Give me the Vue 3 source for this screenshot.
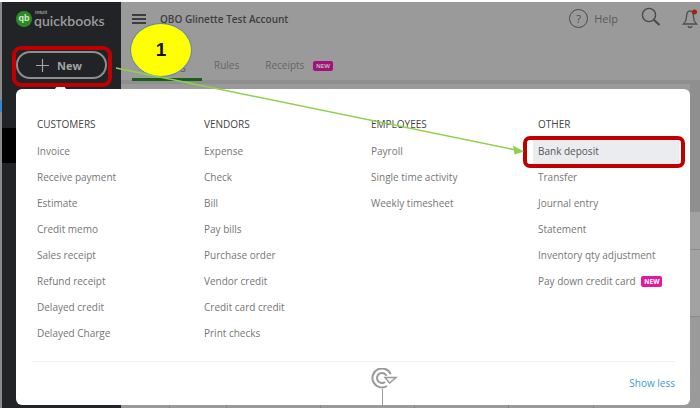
<script setup>
const columns = [
  { title: 'CUSTOMERS', items: ['Invoice', 'Receive payment', 'Estimate', 'Credit memo', 'Sales receipt', 'Refund receipt', 'Delayed credit', 'Delayed Charge'] },
  { title: 'VENDORS', items: ['Expense', 'Check', 'Bill', 'Pay bills', 'Purchase order', 'Vendor credit', 'Credit card credit', 'Print checks'] },
  { title: 'EMPLOYEES', items: ['Payroll', 'Single time activity', 'Weekly timesheet'] },
  { title: 'OTHER', items: ['Bank deposit', 'Transfer', 'Journal entry', 'Statement', 'Inventory qty adjustment', 'Pay down credit card'] },
]
// little column marks of the table behind the menu, they stick out at the bottom
const ticks = [169, 226, 320, 414, 508, 593]
</script>

<template>
  <div class="page">
    <aside class="sidebar">
      <div class="logo">
        <span class="qb">qb</span>
        <div class="wordmark">
          <span class="intuit">intuit</span>
          <span class="quick">quickbooks</span>
        </div>
      </div>
      <div class="new-btn">
        <svg width="13" height="13" viewBox="0 0 13 13"><path d="M6.500 0v13M0 6.500h13" stroke="#a3a3a3" stroke-width="1.2" /></svg>
        <span>New</span>
      </div>
      <div class="blue-mark"></div>
      <div class="black-patch"></div>
    </aside>

    <main class="content">
      <header class="topbar">
        <div class="burger"><i></i><i></i><i></i></div>
        <span class="company">QBO Glinette Test Account</span>
        <div class="top-right">
          <span class="help-circle">?</span>
          <span class="help">Help</span>
          <svg class="search" width="20" height="20" viewBox="0 0 20 20"><circle cx="8" cy="8" r="6.600" fill="none" stroke="#4a4a4a" stroke-width="1.400" /><path d="M13 13l5.500 5" stroke="#4a4a4a" stroke-width="2.200" /></svg>
          <svg class="bell" width="17" height="22" viewBox="0 0 17 22"><path d="M8 3C5 3 4.500 6 4.500 9c0 3-1 5-3 7h13c-2-2-3-4-3-7 0-3-.5-6-3.500-6zM6 18c.5 2 3.500 2 4 0" fill="none" stroke="#4f4f4f" stroke-width="1.300" /><circle cx="12.500" cy="4" r="2.500" fill="#a81c14" /></svg>
        </div>
      </header>
      <nav class="tabs">
        <span class="tab active">Banking</span>
        <span class="tab rules">Rules</span>
        <span class="tab receipts">Receipts <b class="tab-new">NEW</b></span>
      </nav>
    </main>

    <div class="edge"></div>
    <i v-for="x in ticks" :key="x" class="tick" :style="{ left: x + 'px' }"></i>

    <section class="menu">
      <div class="grid">
        <div v-for="col in columns" :key="col.title" class="col">
          <h4>{{ col.title }}</h4>
          <a v-for="item in col.items" :key="item" class="item" :class="{ picked: item === 'Bank deposit' }">
            {{ item }}
            <b v-if="item === 'Pay down credit card'" class="new-tag">NEW</b>
          </a>
        </div>
      </div>
      <footer class="foot">
        <svg class="tour" width="28" height="24" viewBox="0 0 28 24">
          <path d="M19.700 6.200A9.500 9.500 0 1 0 16 18" fill="none" stroke="#9a9a9a" stroke-width="2" />
          <path d="M15.500 7.800A5 5 0 1 0 14 14" fill="none" stroke="#9a9a9a" stroke-width="2" />
          <path d="M14 9.500h11l-6.500 5.500z" fill="#fff" stroke="#9a9a9a" stroke-width="1.500" />
        </svg>
        <a class="less">Show less</a>
      </footer>
      <i class="notch"></i>
    </section>

    <span class="stem"></span>
    <div class="ring new-ring"></div>
    <div class="ring pick-ring"></div>
    <div class="callout">1</div>
    <svg class="arrow" width="700" height="408" viewBox="0 0 700 408">
      <path d="M116 68L516 150" stroke="#8fd14f" stroke-width="1.500" fill="none" />
      <path d="M524 151.500l-11-6 1.500 9z" fill="#8fd14f" />
    </svg>
  </div>
</template>

<style>
html, body { margin: 0; background: #9b9b9b; }
</style>

<style scoped>
.page {
  position: relative;
  display: flex;
  width: 700px;
  height: 408px;
  overflow: hidden;
  background: #9a9a9a;
  font-family: "Open Sans", "Noto Sans", sans-serif;
  border-top: 2px solid #fff;
  box-sizing: border-box;
}
.sidebar {
  position: relative;
  width: 121px;
  flex: none;
  background: #212326;
  border-left: 2px solid #8a8a8a;
  box-sizing: border-box;
}
.blue-mark {
  position: absolute;
  left: -2px;
  top: 98px;
  width: 2px;
  height: 12px;
  background: #3a86c8;
}
.black-patch {
  position: absolute;
  left: 0;
  top: 126px;
  width: 14px;
  height: 35px;
  background: #000;
}
.logo {
  display: flex;
  align-items: center;
  gap: 2px;
  padding: 8px 0 0 14px;
}
.qb {
  width: 16px;
  height: 16px;
  border-radius: 50%;
  background: #2c8a22;
  color: #d8e8d4;
  font: 700 9px/15px "Liberation Sans", sans-serif;
  text-align: center;
}
.wordmark { display: flex; flex-direction: column; color: #9c9c9c; }
.intuit { font: 700 5px/5px "Liberation Sans", sans-serif; margin-left: 1px; }
.quick { font: 600 14px/14px "Lato", sans-serif; margin-top: -1px; }
.new-btn {
  display: flex;
  align-items: center;
  gap: 8px;
  width: 91px;
  height: 28px;
  margin: 23px 0 0 14px;
  padding-left: 18px;
  box-sizing: border-box;
  border: 2.500px solid #8e8e8e;
  border-radius: 14px;
  color: #a3a3a3;
  font-size: 11px;
  font-weight: 700;
}
.content { flex: 1; min-width: 0; }
.topbar {
  display: flex;
  align-items: center;
  height: 33px;
  padding-left: 11px;
}
.burger { display: flex; flex-direction: column; gap: 2px; width: 14px; }
.burger i { height: 2px; background: #3d3d3d; }
.company {
  margin-left: 14px;
  font-size: 10px;
  font-weight: 600;
  color: #3e3e3e;
}
.top-right { display: flex; align-items: center; margin-left: auto; }
.help-circle {
  width: 17px;
  height: 17px;
  border: 1.300px solid #4a4a4a;
  border-radius: 50%;
  text-align: center;
  font-size: 11px;
  line-height: 17px;
  color: #4a4a4a;
}
.help { margin-left: 6px; font-size: 11px; color: #5a5a5a; }
.search { margin-left: 23px; margin-top: -3px; }
.bell { margin-left: 21px; margin-right: 1px; }
.tabs {
  display: flex;
  height: 47px;
  padding-left: 11px;
  border-bottom: 2px solid #8f8f8f;
  background: linear-gradient(#9a9a9a 45px, #8f8f8f 45px);
}
.tab {
  padding-top: 23px;
  font-size: 10px;
  color: #666;
  box-sizing: border-box;
}
.tab.active {
  width: 70px;
  height: 46px;
  text-align: center;
  border-bottom: 3px solid #1b5e1b;
  color: #555;
}
.rules { margin-left: 12px; }
.receipts { margin-left: 26px; }
.tab-new {
  margin-left: 6px;
  padding: 1px 3px;
  border-radius: 2px;
  background: #a3127a;
  color: #b8b8b8;
  font-size: 6px;
  vertical-align: 1px;
}
.edge {
  position: absolute;
  left: 690px;
  top: 80px;
  width: 10px;
  height: 326px;
  background: linear-gradient(#8f8f8f 130px, #a2a2a2 130px, #a2a2a2 167px, #8b8b8b 167px, #8b8b8b 168px, #a2a2a2 168px, #a2a2a2 234px, #8b8b8b 234px, #8b8b8b 235px, #9a9a9a 235px);
}
.tick {
  position: absolute;
  bottom: 0;
  width: 1px;
  height: 4px;
  background: #858585;
}
.menu {
  position: absolute;
  left: 16px;
  top: 87px;
  width: 674px;
  height: 316px;
  box-sizing: border-box;
  padding: 27px 15px 0 16px;
  background: #fff;
  border-radius: 6px;
  display: flex;
  flex-direction: column;
}
.notch {
  position: absolute;
  left: 40px;
  top: -4px;
  width: 9px;
  height: 9px;
  background: #fff;
  border-radius: 2px;
  transform: rotate(45deg);
}
.grid {
  display: grid;
  grid-template-columns: repeat(4, 167px);
  flex: 1;
}
.col { display: flex; flex-direction: column; align-items: flex-start; }
h4 {
  margin: 0 0 6px 5px;
  font-size: 10px;
  line-height: 16px;
  font-weight: 500;
  color: #444;
}
.item {
  height: 26px;
  line-height: 26px;
  padding-left: 5px;
  font-size: 10px;
  color: #767676;
  white-space: nowrap;
}
.item.picked { color: #555; background: #ebecf0; width: 146px; box-sizing: border-box; }
.new-tag {
  margin-left: 3px;
  padding: 1px 3px;
  border-radius: 2px;
  background: #e5189c;
  color: #fff;
  font-size: 6.500px;
  vertical-align: 1px;
}
.foot {
  position: relative;
  display: flex;
  justify-content: flex-end;
  align-items: center;
  height: 43px;
  border-top: 1px solid #f2f2f2;
}
.tour { position: absolute; left: 339px; top: 6px; }
.less { color: #3a9ad9; font-size: 10px; font-weight: 500; margin-bottom: 1px; }
.stem {
  position: absolute;
  left: 382px;
  top: 387px;
  width: 1px;
  height: 22px;
  background: #9a9a9a;
}
.ring {
  position: absolute;
  box-sizing: border-box;
  border: 4px solid #c00000;
}
.new-ring { left: 12px; top: 44px; width: 100px; height: 41px; border-radius: 9px; }
.pick-ring { left: 523px; top: 134px; width: 162px; height: 32px; border-radius: 7px; }
.callout {
  position: absolute;
  left: 130px;
  top: 21px;
  width: 62px;
  height: 54px;
  box-sizing: border-box;
  border: 1px solid #5b86b0;
  border-radius: 50%;
  background: #ffff00;
  color: #111;
  font: 700 19px/52px "Liberation Sans", sans-serif;
  text-align: center;
}
.arrow { position: absolute; left: 0; top: -2px; pointer-events: none; }
</style>
